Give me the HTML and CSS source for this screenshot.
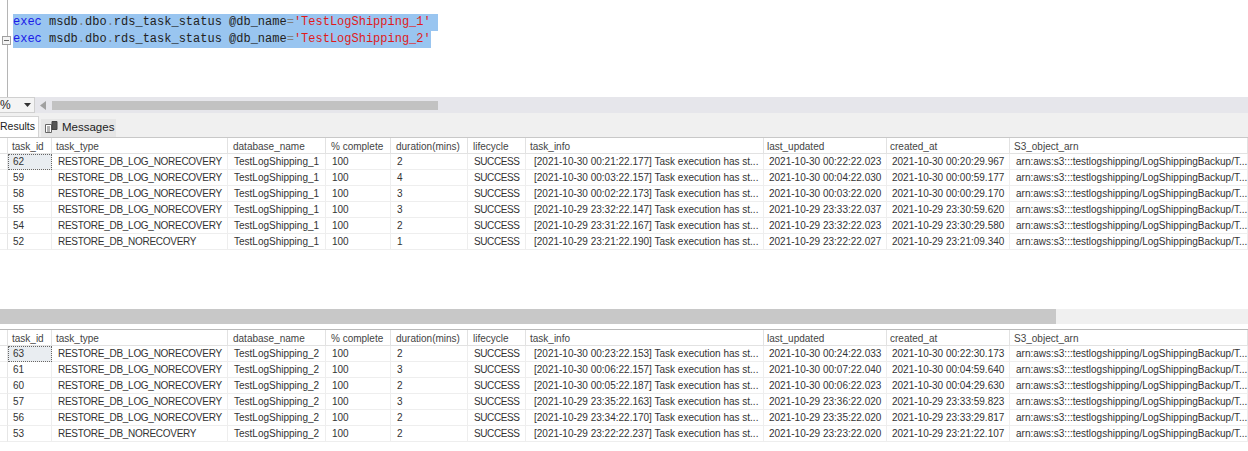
FILE: index.html
```html
<!DOCTYPE html>
<html lang="en">
<head>
<meta charset="utf-8">
<title>Query results</title>
<link rel="stylesheet" href="styles.css">
</head>
<body>
<section class="editor">
  <div class="gutter"><span class="fold"></span></div>
  <div class="code">
    <div class="line"><span class="sel sel-long"><span class="kw">exec</span> msdb<span class="op">.</span>dbo<span class="op">.</span>rds_task_status @db_name<span class="op">=</span><span class="str">'TestLogShipping_1'</span></span></div>
    <div class="line"><span class="sel"><span class="kw">exec</span> msdb<span class="op">.</span>dbo<span class="op">.</span>rds_task_status @db_name<span class="op">=</span><span class="str">'TestLogShipping_2'</span></span></div>
  </div>
</section>
<div class="zoombar">
  <div class="combo"><span>%</span><svg class="caret" width="7" height="4" viewBox="0 0 7 4"><path d="M0 0h7L3.5 4z"/></svg></div>
  <svg class="arrow" width="6" height="9" viewBox="0 0 6 9"><path d="M6 0v9L0 4.500z"/></svg>
  <div class="thumb"></div>
</div>
<div class="tabs">
  <div class="tab tab-on">Results</div>
  <div class="tab tab-off">
    <svg class="msg-icon" width="13" height="12" viewBox="0 0 13 12"><path class="pg" d="M.5 3.500h6v8h-6z"/><path class="ln" d="M2 6h3M2 8h3M2 10h3"/><path class="dk" d="M7 .5h5v8H7z"/></svg>
    <span>Messages</span>
  </div>
</div>
<section class="grid grid-first">
  <div class="corner"></div><div class="hd">task_id</div><div class="hd">task_type</div><div class="hd">database_name</div><div class="hd">% complete</div><div class="hd">duration(mins)</div><div class="hd">lifecycle</div><div class="hd">task_info</div><div class="hd">last_updated</div><div class="hd">created_at</div><div class="hd">S3_object_arn</div>
  <div class="rh"></div><div class="c cur">62</div><div class="c">RESTORE_DB_LOG_NORECOVERY</div><div class="c">TestLogShipping_1</div><div class="c">100</div><div class="c">2</div><div class="c">SUCCESS</div><div class="c">[2021-10-30 00:21:22.177] Task execution has st...</div><div class="c">2021-10-30 00:22:22.023</div><div class="c">2021-10-30 00:20:29.967</div><div class="c">arn:aws:s3:::testlogshipping/LogShippingBackup/T...</div>
  <div class="rh"></div><div class="c">59</div><div class="c">RESTORE_DB_LOG_NORECOVERY</div><div class="c">TestLogShipping_1</div><div class="c">100</div><div class="c">4</div><div class="c">SUCCESS</div><div class="c">[2021-10-30 00:03:22.157] Task execution has st...</div><div class="c">2021-10-30 00:04:22.030</div><div class="c">2021-10-30 00:00:59.177</div><div class="c">arn:aws:s3:::testlogshipping/LogShippingBackup/T...</div>
  <div class="rh"></div><div class="c">58</div><div class="c">RESTORE_DB_LOG_NORECOVERY</div><div class="c">TestLogShipping_1</div><div class="c">100</div><div class="c">3</div><div class="c">SUCCESS</div><div class="c">[2021-10-30 00:02:22.173] Task execution has st...</div><div class="c">2021-10-30 00:03:22.020</div><div class="c">2021-10-30 00:00:29.170</div><div class="c">arn:aws:s3:::testlogshipping/LogShippingBackup/T...</div>
  <div class="rh"></div><div class="c">55</div><div class="c">RESTORE_DB_LOG_NORECOVERY</div><div class="c">TestLogShipping_1</div><div class="c">100</div><div class="c">3</div><div class="c">SUCCESS</div><div class="c">[2021-10-29 23:32:22.147] Task execution has st...</div><div class="c">2021-10-29 23:33:22.037</div><div class="c">2021-10-29 23:30:59.620</div><div class="c">arn:aws:s3:::testlogshipping/LogShippingBackup/T...</div>
  <div class="rh"></div><div class="c">54</div><div class="c">RESTORE_DB_LOG_NORECOVERY</div><div class="c">TestLogShipping_1</div><div class="c">100</div><div class="c">2</div><div class="c">SUCCESS</div><div class="c">[2021-10-29 23:31:22.167] Task execution has st...</div><div class="c">2021-10-29 23:32:22.023</div><div class="c">2021-10-29 23:30:29.580</div><div class="c">arn:aws:s3:::testlogshipping/LogShippingBackup/T...</div>
  <div class="rh"></div><div class="c">52</div><div class="c">RESTORE_DB_NORECOVERY</div><div class="c">TestLogShipping_1</div><div class="c">100</div><div class="c">1</div><div class="c">SUCCESS</div><div class="c">[2021-10-29 23:21:22.190] Task execution has st...</div><div class="c">2021-10-29 23:22:22.027</div><div class="c">2021-10-29 23:21:09.340</div><div class="c">arn:aws:s3:::testlogshipping/LogShippingBackup/T...</div>
</section>
<div class="hscroll"><div class="hthumb"></div></div>
<section class="grid">
  <div class="corner"></div><div class="hd">task_id</div><div class="hd">task_type</div><div class="hd">database_name</div><div class="hd">% complete</div><div class="hd">duration(mins)</div><div class="hd">lifecycle</div><div class="hd">task_info</div><div class="hd">last_updated</div><div class="hd">created_at</div><div class="hd">S3_object_arn</div>
  <div class="rh"></div><div class="c cur">63</div><div class="c">RESTORE_DB_LOG_NORECOVERY</div><div class="c">TestLogShipping_2</div><div class="c">100</div><div class="c">2</div><div class="c">SUCCESS</div><div class="c">[2021-10-30 00:23:22.153] Task execution has st...</div><div class="c">2021-10-30 00:24:22.033</div><div class="c">2021-10-30 00:22:30.173</div><div class="c">arn:aws:s3:::testlogshipping/LogShippingBackup/T...</div>
  <div class="rh"></div><div class="c">61</div><div class="c">RESTORE_DB_LOG_NORECOVERY</div><div class="c">TestLogShipping_2</div><div class="c">100</div><div class="c">3</div><div class="c">SUCCESS</div><div class="c">[2021-10-30 00:06:22.157] Task execution has st...</div><div class="c">2021-10-30 00:07:22.040</div><div class="c">2021-10-30 00:04:59.640</div><div class="c">arn:aws:s3:::testlogshipping/LogShippingBackup/T...</div>
  <div class="rh"></div><div class="c">60</div><div class="c">RESTORE_DB_LOG_NORECOVERY</div><div class="c">TestLogShipping_2</div><div class="c">100</div><div class="c">2</div><div class="c">SUCCESS</div><div class="c">[2021-10-30 00:05:22.187] Task execution has st...</div><div class="c">2021-10-30 00:06:22.023</div><div class="c">2021-10-30 00:04:29.630</div><div class="c">arn:aws:s3:::testlogshipping/LogShippingBackup/T...</div>
  <div class="rh"></div><div class="c">57</div><div class="c">RESTORE_DB_LOG_NORECOVERY</div><div class="c">TestLogShipping_2</div><div class="c">100</div><div class="c">3</div><div class="c">SUCCESS</div><div class="c">[2021-10-29 23:35:22.163] Task execution has st...</div><div class="c">2021-10-29 23:36:22.020</div><div class="c">2021-10-29 23:33:59.823</div><div class="c">arn:aws:s3:::testlogshipping/LogShippingBackup/T...</div>
  <div class="rh"></div><div class="c">56</div><div class="c">RESTORE_DB_LOG_NORECOVERY</div><div class="c">TestLogShipping_2</div><div class="c">100</div><div class="c">2</div><div class="c">SUCCESS</div><div class="c">[2021-10-29 23:34:22.170] Task execution has st...</div><div class="c">2021-10-29 23:35:22.020</div><div class="c">2021-10-29 23:33:29.817</div><div class="c">arn:aws:s3:::testlogshipping/LogShippingBackup/T...</div>
  <div class="rh"></div><div class="c">53</div><div class="c">RESTORE_DB_NORECOVERY</div><div class="c">TestLogShipping_2</div><div class="c">100</div><div class="c">2</div><div class="c">SUCCESS</div><div class="c">[2021-10-29 23:22:22.237] Task execution has st...</div><div class="c">2021-10-29 23:23:22.020</div><div class="c">2021-10-29 23:21:22.107</div><div class="c">arn:aws:s3:::testlogshipping/LogShippingBackup/T...</div>
</section>
</body>
</html>
```
FILE: styles.css
```css
* { box-sizing: border-box; }
html, body { margin: 0; padding: 0; }
body { width: 1248px; height: 451px; overflow: hidden; background: #fff; font-family: "Liberation Sans", Arial, sans-serif; font-size: 10px; color: #333; }

.editor { height: 97px; display: flex; }
.gutter { width: 8px; flex: none; border-right: 1px solid #b5b5b5; position: relative; }
.fold { position: absolute; left: 2px; top: 36px; width: 9px; height: 9px; background: #f4f4f4; border: 1px solid #a0a0a0; }
.fold::after { content: ""; position: absolute; left: 1px; top: 3px; width: 5px; height: 1px; background: #666; }
.code { padding: 14px 0 0 5px; font-family: "Liberation Mono", monospace; font-size: 12px; color: #222; }
.line { height: 17px; line-height: 17px; }
.sel { display: inline-block; height: 17px; background: #99c5f0; }
.sel-long { padding-right: 7px; }
.kw { color: #1a1ae8; }
.op { color: #808080; }
.str { color: #e01b1b; }

.zoombar { height: 16px; background: #e6e6eb; display: flex; align-items: center; }
.combo { width: 35px; height: 16px; background: #f4f4f4; border: 1px solid #d0d0d0; border-left: 0; display: flex; align-items: center; justify-content: space-between; padding-right: 3px; font-size: 12px; color: #222; }
.caret { fill: #333; }
.arrow { margin-left: 5px; fill: #a0a0a0; }
.thumb { margin-left: 6px; width: 386px; height: 9px; background: #c2c2c2; }

.tabs { height: 25px; background: #f0f0f0; display: flex; align-items: flex-end; border-bottom: 1px solid #c8c8c8; }
.tab { color: #222; display: flex; align-items: center; padding-bottom: 2px; }
.tab-on { width: 39px; height: 21px; font-size: 10.5px; background: #fff; border: 1px solid #d4d4d4; border-left: 0; border-bottom: 0; }
.tab-off { width: 75px; height: 18px; margin-left: 2px; font-size: 11.5px; background: #e6e6e6; padding-left: 4px; gap: 4px; }
.msg-icon { flex: none; }
.msg-icon .pg { fill: #fff; stroke: #666; }
.msg-icon .ln { stroke: #666; }
.msg-icon .dk { fill: #555; stroke: #444; }

.grid { display: grid; grid-template-columns: 8px 44px 176px 98px 65px 77px 58px 238px 123px 123px 238px; grid-auto-rows: 16px; }
.grid-first { height: 171px; align-content: start; }
.corner, .hd { border-right: 1px solid #e2e2e2; border-bottom: 1px solid #e2e2e2; }
.hd { padding-left: 4px; line-height: 18px; white-space: nowrap; color: #444; }
.hd:nth-child(n+4):nth-child(-n+7) { padding-left: 5px; }
.hd:nth-child(9), .hd:nth-child(10) { padding-left: 3px; }
.rh { border-right: 1px solid #e6e6e6; border-bottom: 1px solid #eeeeee; }
.c { padding-left: 6px; line-height: 15px; white-space: nowrap; overflow: hidden; border-right: 1px solid #eeeeee; border-bottom: 1px solid #eeeeee; }
.c:nth-child(11n+2), .c:nth-child(11n+9), .c:nth-child(11n+10) { padding-left: 5px; }
.c:nth-child(11n+8) { padding-left: 8px; }
.c:nth-child(11n+3) { letter-spacing: -.28px; }
.c:nth-child(11n+7) { letter-spacing: -.4px; }
.cur { background: #e9edf1; outline: 1px dotted #666; outline-offset: -1px; }

.hscroll { height: 21px; background: #fff; border-bottom: 1px solid #b9b9b9; padding-bottom: 6px; }
.hthumb { height: 15px; background: linear-gradient(to right, #c8c8c8 1056px, #f0f0f0 1056px); }
```
